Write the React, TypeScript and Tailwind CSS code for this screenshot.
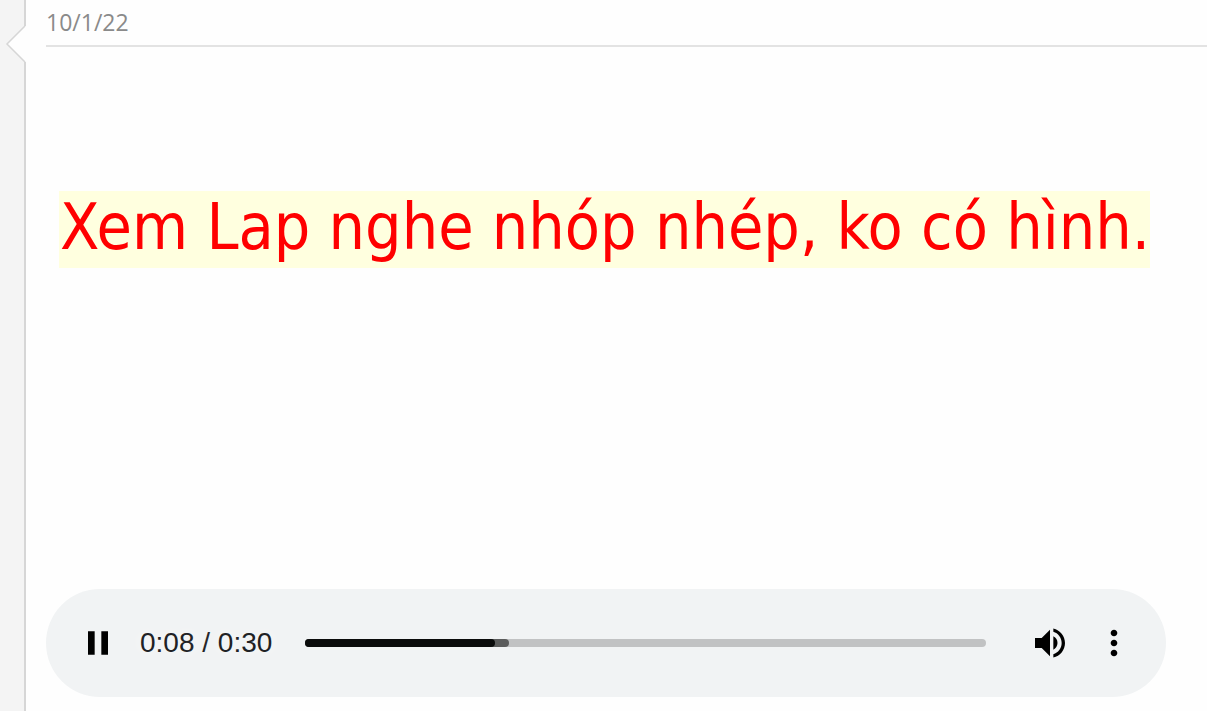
import React, { useState } from 'react';
import { MdMoreVert, MdPause, MdPlayArrow, MdVolumeOff, MdVolumeUp } from 'react-icons/md';

const DURATION = 681;
const BUFFERED = 204;

const formatTime = (value: number) => {
    const seconds = Math.floor((value / DURATION) * 30);
    return `0:${String(seconds).padStart(2, '0')}`;
};

const Rail: React.FC = () => (
    <div className="relative w-[26px] shrink-0 border-r-2 border-[#d6d6d6] bg-[#f4f4f4]">
        <svg className="absolute top-6 left-0 h-10 w-[26px]" viewBox="0 0 26 40" fill="none">
            <path d="M26 2L25 2L7 20L25 38H26Z" fill="#fefefe" />
            <path d="M25 2L7 20L25 38" stroke="#d6d6d6" strokeWidth="1.5" />
        </svg>
    </div>
);

const AudioPlayer: React.FC = () => {
    const [playing, setPlaying] = useState(true);
    const [muted, setMuted] = useState(false);
    const [position, setPosition] = useState(190);

    return (
        <div className="flex h-[108px] items-center rounded-full bg-[#f1f3f4] px-8 text-black">
            <button type="button" aria-label={playing ? 'Pause' : 'Play'} onClick={() => setPlaying(!playing)}>
                {playing ? <MdPause size={40} /> : <MdPlayArrow size={40} />}
            </button>
            <span className="ml-[22px] whitespace-nowrap font-['Liberation_Sans',sans-serif] text-[28px] leading-8 text-[#202124] [text-shadow:0_0_20px_#fff]">
                {formatTime(position)} / {formatTime(DURATION)}
            </span>

            {/* Timeline */}
            <div className="relative mr-11 ml-[33px] h-2 flex-1 rounded-full bg-[#c1c2c3]">
                <div className="absolute inset-y-0 left-0 rounded-full bg-[#5b5c5c]" style={{ width: `${(BUFFERED / DURATION) * 100}%` }} />
                <div className="absolute inset-y-0 left-0 rounded-full bg-[#0a0b0b]" style={{ width: `${(position / DURATION) * 100}%` }} />
                <input
                    type="range"
                    aria-label="Seek"
                    min={0}
                    max={DURATION}
                    value={position}
                    onChange={(e) => setPosition(Number(e.target.value))}
                    className="absolute inset-0 h-full w-full cursor-pointer opacity-0"
                />
            </div>

            <div className="flex items-center gap-6">
                <button type="button" aria-label={muted ? 'Unmute' : 'Mute'} onClick={() => setMuted(!muted)}>
                    {muted ? <MdVolumeOff size={40} /> : <MdVolumeUp size={40} />}
                </button>
                <button type="button" aria-label="More options">
                    <MdMoreVert size={40} />
                </button>
            </div>
        </div>
    );
};

const App: React.FC = () => {
    return (
        <div className="flex min-h-screen bg-[#fefefe]">
            <Rail />
            <main className="flex min-w-0 flex-1 flex-col pb-[14px] pl-5">
                <header className="border-b-2 border-[#e3e3e3] pt-[6px] pb-[7px] font-['Open_Sans',sans-serif] text-[23px] leading-8 text-[#8a8a8a]">
                    <time dateTime="2022-10-01">10/1/22</time>
                </header>
                <div className="mt-36 flex-1 pl-[13px]">
                    <h1 className="inline-block whitespace-nowrap bg-[#ffffdf] pb-1 pl-px font-['DejaVu_Sans_Condensed',sans-serif] text-[64px] leading-[73px] text-[#ff0000]">
                        Xem Lap nghe nhóp nhép, ko có hình.
                    </h1>
                </div>
                <div className="mr-[41px]">
                    <AudioPlayer />
                </div>
            </main>
        </div>
    );
};

export default App;
